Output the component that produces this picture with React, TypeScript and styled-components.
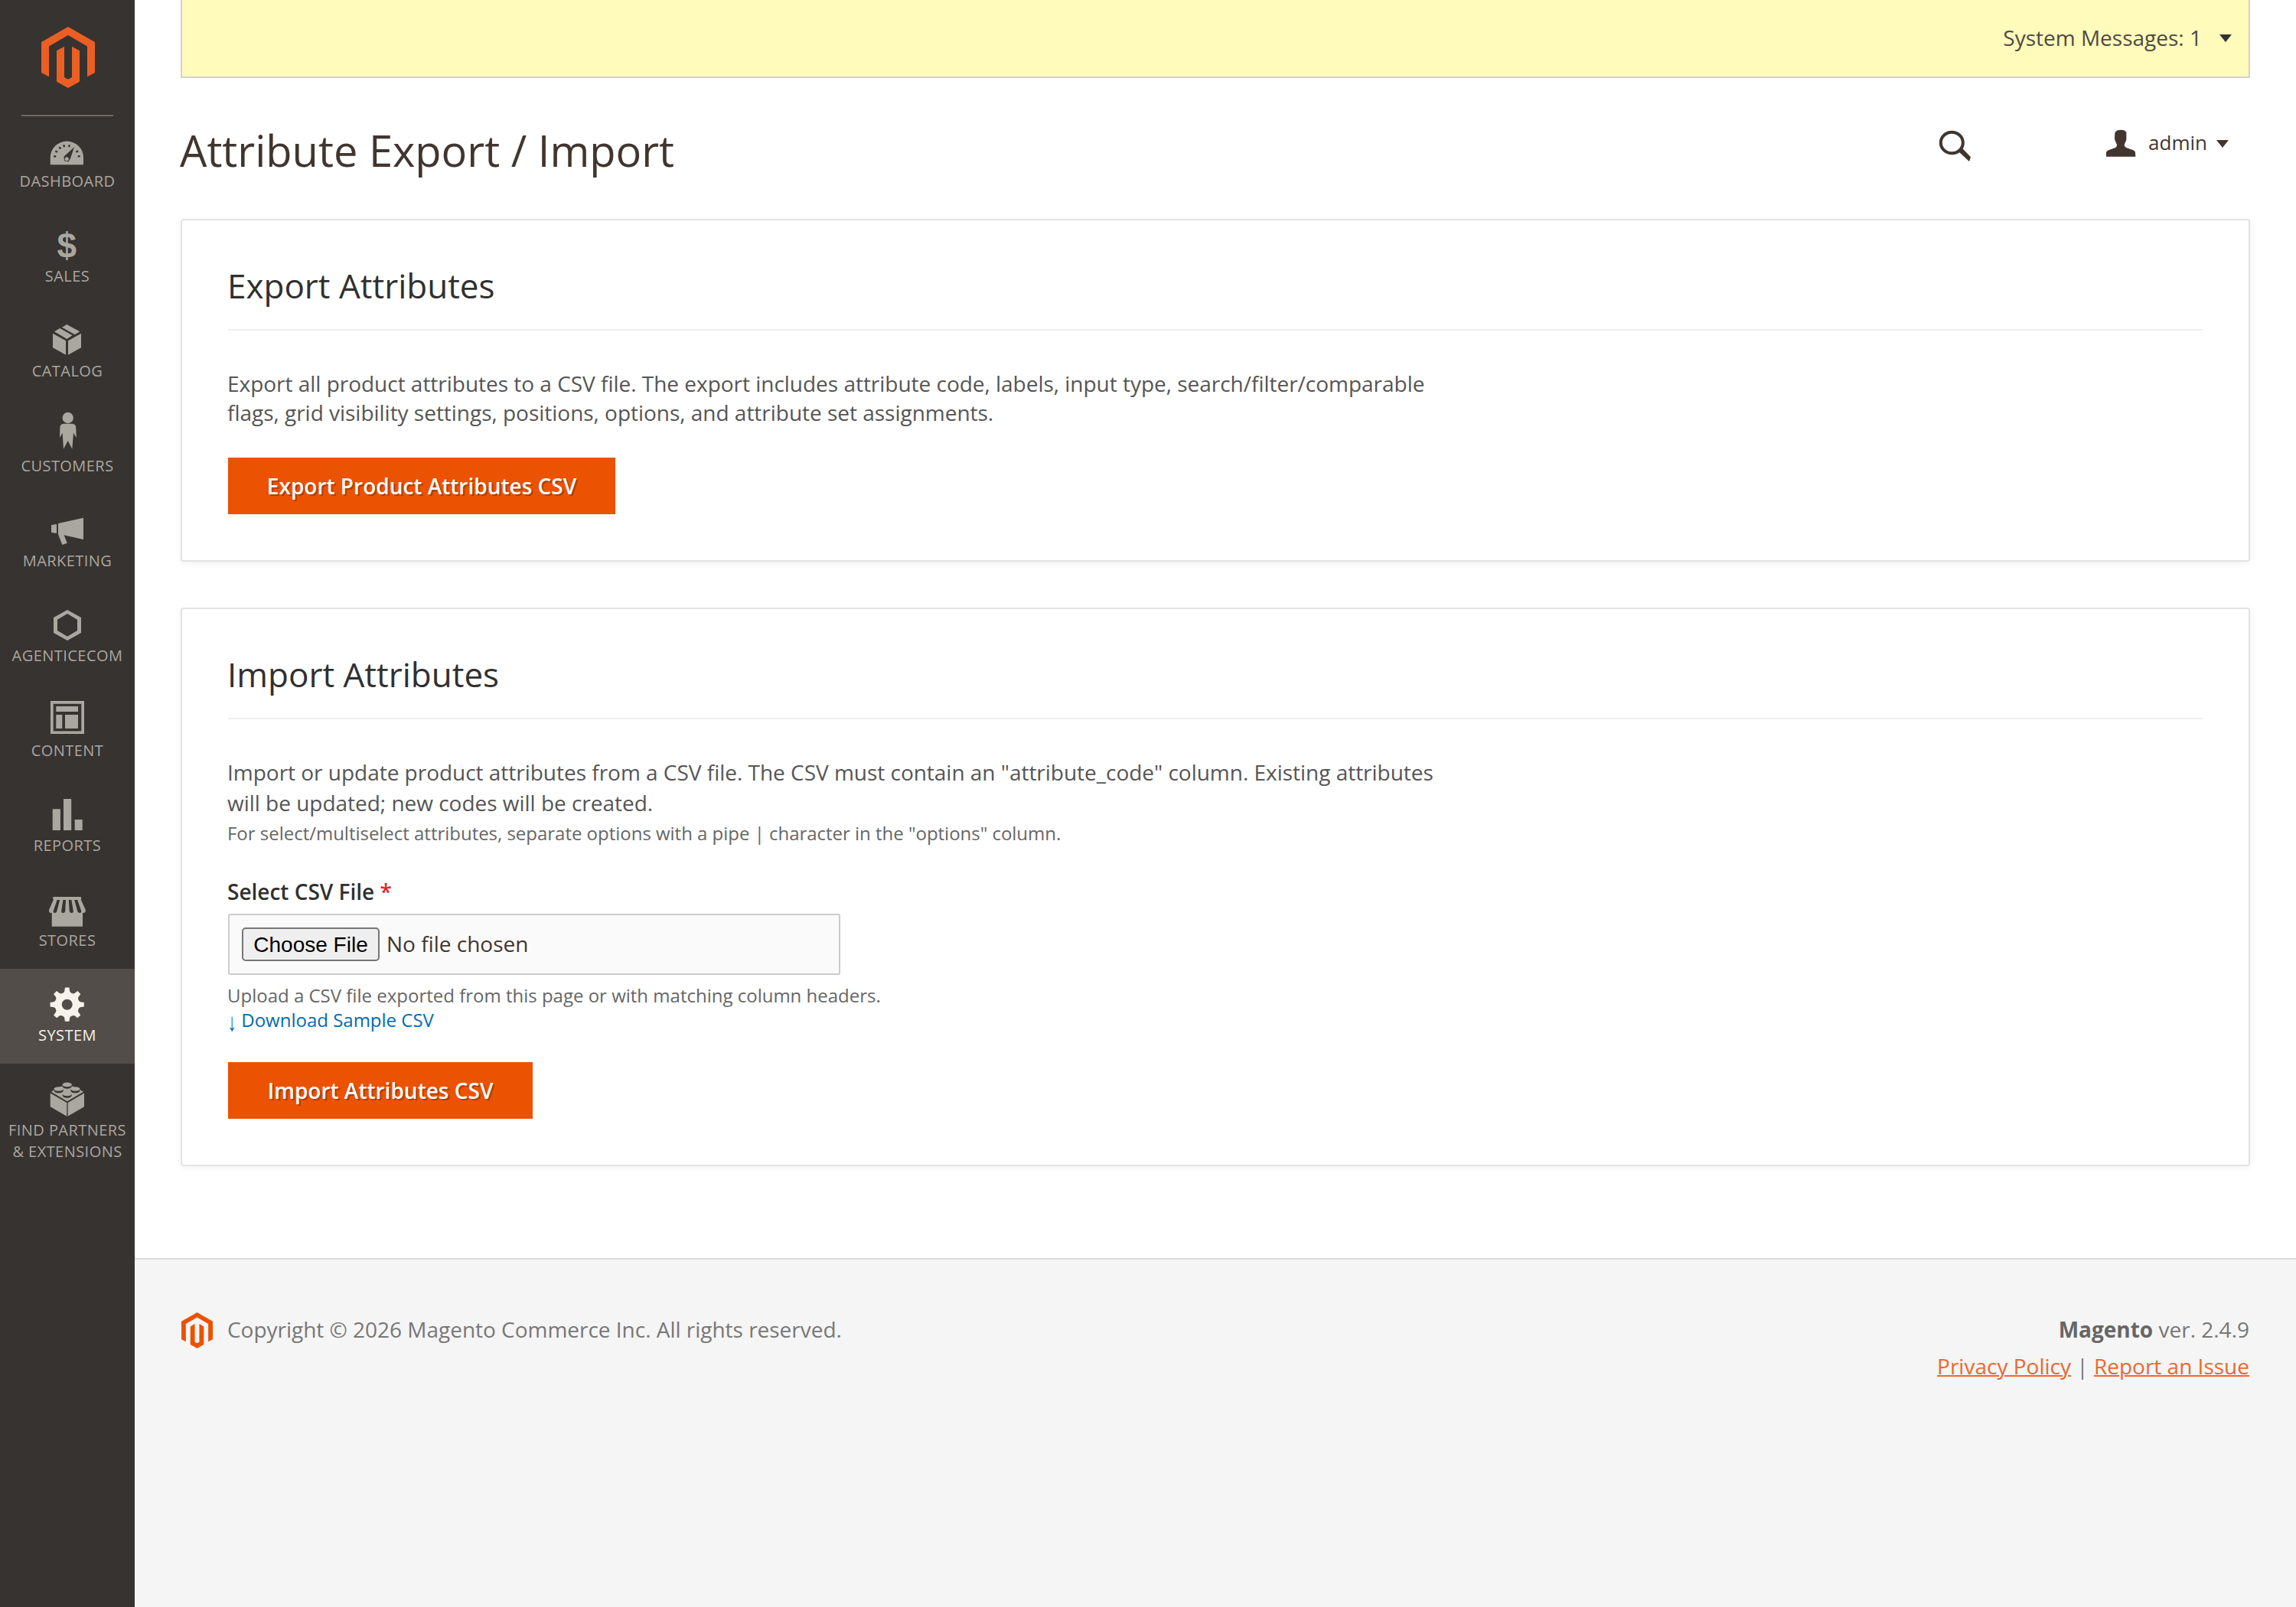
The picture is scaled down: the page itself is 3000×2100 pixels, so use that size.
import React from "react";
import styled, { createGlobalStyle } from "styled-components";

const FONT = '"Open Sans", "Noto Sans", sans-serif';

const GlobalStyle = createGlobalStyle`
  * { box-sizing: border-box; }
  body { margin: 0; background: #fff; font-family: ${FONT}; font-size: 28px; color: #41362f; }
  h1, h2, p { margin: 0; font-weight: 400; }
`;

const Page = styled.div`
  display: flex;
  width: 3000px;
  height: 2100px;
  overflow: hidden;
`;

const Sidebar = styled.nav`
  flex: none;
  width: 176px;
  background: #373330;
`;

const LogoArea = styled.a`
  display: flex;
  justify-content: center;
  height: 150px;
  padding: 35px 0 0 2px;
`;

const Divider = styled.div`
  height: 2px;
  margin: 0 28px -2px;
  background: #736963;
`;

const MenuItem = styled.a<{ $active?: boolean; $tall?: boolean }>`
  display: flex;
  flex-direction: column;
  align-items: center;
  height: ${(p) => (p.$tall ? 152 : 124)}px;
  padding-top: 16px;
  background: ${(p) => (p.$active ? "#524d49" : "transparent")};
  color: ${(p) => (p.$active ? "#f7f3eb" : "#aaa6a0")};
  fill: currentColor;
`;

const MenuIcon = styled.svg`
  display: block;
  width: 64px;
  height: 56px;
  --cut: #373330;
`;

const MenuLabel = styled.span`
  margin-top: 1px;
  font-size: 20px;
  letter-spacing: 0.45px;
  line-height: 28px;
  text-align: center;
  text-transform: uppercase;
  white-space: pre-line;
`;

const Main = styled.div`
  flex: 1;
  display: flex;
  flex-direction: column;
  min-width: 0;
`;

const Content = styled.div`
  flex: none;
  height: 1644px;
  padding: 0 60px;
`;

const MessageBar = styled.div`
  display: flex;
  align-items: center;
  justify-content: flex-end;
  gap: 23px;
  height: 102px;
  padding-right: 22px;
  border: 2px solid #d1d1d1;
  border-top: 0;
  background: #fffbbb;
  color: #514943;
`;

const MessageCount = styled.span`
  padding-bottom: 2px;
`;

const Caret = styled.span<{ $color: string }>`
  width: 0;
  height: 0;
  border: 8px solid transparent;
  border-top: 10px solid ${(p) => p.$color};
  border-bottom: 0;
`;

const PageHeader = styled.header`
  display: flex;
  justify-content: space-between;
  height: 184px;
`;

const PageTitle = styled.h1`
  padding-top: 56px;
  font-size: 56px;
  line-height: 76px;
  text-indent: -1px;
`;

const HeaderTools = styled.div`
  display: flex;
  align-items: flex-start;
  padding: 65px 28px 0 0;
`;

const SearchIcon = styled.svg`
  width: 50px;
  height: 50px;
  margin-right: 171px;
`;

const UserMenu = styled.div`
  display: flex;
  align-items: center;
  height: 40px;
  padding-top: 2px;
  font-size: 26px;
`;

const UserIcon = styled.svg`
  width: 40px;
  height: 36px;
  margin: -2px 16px 0 0;
`;

const UserName = styled.span`
  margin-right: 12px;
  padding-bottom: 4px;
`;

const Card = styled.section<{ $height: number }>`
  height: ${(p) => p.$height}px;
  margin-bottom: 60px;
  padding: 52px 60px 0;
  border: 2px solid #e3e3e3;
  border-radius: 4px;
  box-shadow: 0 2px 8px rgba(0, 0, 0, 0.06);
`;

const CardTitle = styled.h2`
  height: 92px;
  padding-top: 1px;
  border-bottom: 2px solid #f0f0f0;
  font-size: 44px;
  line-height: 64px;
  text-indent: -1px;
  color: #303030;
`;

const Intro = styled.p<{ $line: number; $top: number }>`
  width: 1600px;
  margin-left: -1px;
  padding-top: ${(p) => p.$top}px;
  letter-spacing: -0.02px;
  line-height: ${(p) => p.$line}px;
  color: #555;
`;

const Note = styled.p`
  margin: 1px 0 0 -1px;
  font-size: 24px;
  letter-spacing: -0.02px;
  line-height: 38px;
  color: #666;
`;

const PrimaryButton = styled.button<{ $width: number; $top: number }>`
  display: flex;
  align-items: center;
  justify-content: center;
  width: ${(p) => p.$width}px;
  height: 74px;
  margin-top: ${(p) => p.$top}px;
  padding: 0 0 1px;
  border: 0;
  background: #eb5202;
  color: #fff;
  font: 600 28px ${FONT};
  text-shadow: 2px 2px 0 rgba(0, 0, 0, 0.25);
`;

const FieldLabel = styled.label`
  display: block;
  margin: 38px 0 0 -1px;
  font-weight: 600;
  line-height: 38px;
  color: #303030;
`;

const Required = styled.span`
  color: #e22626;
`;

const FileField = styled.div`
  display: flex;
  align-items: center;
  gap: 9px;
  width: 800px;
  height: 80px;
  margin-top: 10px;
  padding-left: 16px;
  border: 2px solid #ccc;
  border-radius: 2px;
  background: #fafafa;
`;

const ChooseButton = styled.button`
  width: 180px;
  height: 44px;
  padding: 1px 0 0;
  border: 2px solid #767676;
  border-radius: 5px;
  background: #efefef;
  color: #000;
  font: 28px "Liberation Sans", Arial, sans-serif;
`;

const FileName = styled.span`
  padding-bottom: 2px;
`;

const Help = styled.p`
  margin: 11px 0 0 -1px;
  font-size: 24px;
  line-height: 32px;
  color: #666;
`;

const SampleLink = styled.a`
  display: block;
  height: 32px;
  color: #006bb4;
`;

const DownArrow = styled.span`
  display: inline-block;
  font-family: "Liberation Serif", "Times New Roman", serif;
  line-height: 1;
  transform: translateY(2px) scaleY(1.35);
`;

const Footer = styled.footer`
  flex: 1;
  display: flex;
  justify-content: space-between;
  padding: 67px 60px 0;
  border-top: 2px solid #ddd;
  background: #f5f5f5;
  color: #777;
`;

const Copyright = styled.div`
  display: flex;
  align-items: flex-start;
  gap: 19px;
  line-height: 48px;
  padding-left: 1px;
  letter-spacing: -0.02px;
`;

const FooterLogo = styled.svg`
  width: 41px;
  height: 47px;
  margin-top: 2px;
`;

const Legal = styled.div`
  margin-right: 1px;
  line-height: 48px;
  text-align: right;

  strong { color: #666; font-weight: 700; }
`;

const FooterLink = styled.a`
  color: #ef672f;
  text-decoration: underline;
  text-decoration-thickness: 2px;
`;

const LogoShape = () => (
  <path d="M35 0 70 20V60L60 65.3V25.5L35 11 10 25.5V65.3L0 60V20ZM30 25.7V66L35 68.7 40 66V25.7L50 31.3V71.7L35 80 20 71.7V31.3Z" />
);

const gearPath = () => {
  const points: string[] = [];
  for (let tooth = 0; tooth < 8; tooth++) {
    const base = (tooth * Math.PI) / 4 - Math.PI / 2;
    [
      [-0.29, 16.2],
      [-0.2, 17.6],
      [-0.125, 22.3],
      [0.125, 22.3],
      [0.2, 17.6],
      [0.29, 16.2],
    ].forEach(([offset, radius]) => {
      const x = 87.7 + radius * Math.cos(base + offset);
      const y = 46.7 + radius * Math.sin(base + offset);
      points.push(`${x.toFixed(2)} ${y.toFixed(2)}`);
    });
  }
  return `M${points.join("L")}Z M94.7 46.7a7 7 0 1 0-14 0a7 7 0 1 0 14 0Z`;
};

const ticks = [
  [71.7, 54.3, 5],
  [73.7, 48, 25],
  [78.3, 43.3, 45],
  [83.7, 40.7, 75],
  [90.5, 40.7, 105],
  [100.7, 48, 155],
  [103.2, 54.3, 175],
];

const icons: Record<string, React.ReactNode> = {
  dashboard: (
    <>
      <path d="M65.7 65.3V56a21.65 21.4 0 0 1 43.3 0v9.3Z" />
      <g fill="var(--cut)">
        {ticks.map(([x, y, turn]) => (
          <rect key={x} x={x - 1.5} y={y - 1.1} width="3" height="2.3" transform={`rotate(${turn} ${x} ${y})`} />
        ))}
        <path d="M97 42.3 92 57 89.6 61.2 84.4 60.6 83.3 54.8Z" />
      </g>
      <circle cx="87.3" cy="57.7" r="2.5" />
    </>
  ),
  sales: (
    <text x="87.4" y="62.8" textAnchor="middle" fontFamily="Liberation Sans, Arial, sans-serif" fontWeight="700" fontSize="46">
      $
    </text>
  ),
  catalog: (
    <path d="M69 37.7 86 47.3V65.7L69 56.3ZM89 47.3 106 37.7V56.3L89 65.7ZM71 35.3 78.3 31 94.7 40.3 87.3 45ZM81 29.7 87.3 26 104.3 35.3 97.7 39.3Z" />
  ),
  customers: (
    <>
      <circle cx="88.7" cy="24" r="7.2" />
      <path d="M83 31.7H94.5Q98.7 32 99.2 36L99.8 50 96 43.7 94.3 64.7 88.7 54 83 64.7 81.6 43.7 78 50 78.4 36Q79 32 83 31.7Z" />
    </>
  ),
  marketing: (
    <path d="M67 40 74 39V51L67 49.7ZM76 38 109 30.7V59L83.7 53.3 87.7 63.7 81.3 66 76 52Z" />
  ),
  agenticecom: (
    <path fillRule="evenodd" d="M88 27 106 37V57L88 67 70 57V37ZM88 32 75 39.7V54L88 61.7 101 54V39.7Z" />
  ),
  content: (
    <path fillRule="evenodd" d="M66 22H110V65H66ZM69.7 25.7V61.4H106.3V25.7ZM73.3 29H102V36H73.3ZM73.3 40H81.3V58H73.3ZM85 40H102V58H85Z" />
  ),
  reports: <path d="M68.7 39.2H78.9V67H68.7ZM83 26H93.2V67H83ZM97.7 53H107.7V67H97.7Z" />,
  stores: (
    <>
      <path d="M70 30H105Q106.4 30 106.4 32L105.7 33.5 111.8 47Q112 51 109 51H108V68.8H67.7V51H66.5Q63.5 51 64 47L70 33.5 69 32Q69 30 70 30Z" />
      <path
        fill="var(--cut)"
        d="M74.6 34H78.2L74.4 48.5Q73.8 51 71.6 51Q69.3 51 69.7 48.5ZM82.4 34H86L85.2 48.5Q84.8 51 82.6 51Q80 51 80.2 48.5ZM89.8 34H93.4L95.8 48.5Q96 51 93.6 51Q91 51 90.7 48.5ZM97.2 34H101.2L106.2 48.5Q106.4 51 104 51Q101.8 51 101.2 48.5Z"
      />
    </>
  ),
  system: <path fillRule="evenodd" d={gearPath()} />,
  partners: (
    <>
      <path d="M65.7 38.6 87.3 51V68.7L65.7 56.3ZM88.6 51 110 38.6V56.3L88.6 68.7ZM67 36.8 74 32 87.7 27 101 32 109 36.8 87.9 49.2Z" />
      {[
        [87.7, 27.4],
        [76.7, 33],
        [98.3, 33],
        [87.7, 39.4],
      ].map(([x, y]) => (
        <g key={`${x}-${y}`}>
          <path fill="var(--cut)" d={`M${x - 6} ${y}V${y + 2.4}A6 2.9 0 0 0 ${x + 6} ${y + 2.4}V${y}Z`} />
          <ellipse cx={x} cy={y} rx="6.2" ry="2.8" />
        </g>
      ))}
    </>
  ),
};

const menu = [
  { icon: "dashboard", label: "Dashboard" },
  { icon: "sales", label: "Sales" },
  { icon: "catalog", label: "Catalog" },
  { icon: "customers", label: "Customers" },
  { icon: "marketing", label: "Marketing" },
  { icon: "agenticecom", label: "Agenticecom" },
  { icon: "content", label: "Content" },
  { icon: "reports", label: "Reports" },
  { icon: "stores", label: "Stores" },
  { icon: "system", label: "System", active: true },
  { icon: "partners", label: "Find Partners\n& Extensions", tall: true },
];

export default function App() {
  return (
    <>
      <GlobalStyle />
      <Page>
        <Sidebar>
          <LogoArea>
            <svg width="70" height="80" viewBox="0 0 70 80" fill="#eb5f24">
              <LogoShape />
            </svg>
          </LogoArea>
          <Divider />
          {menu.map((item) => (
            <MenuItem key={item.icon} $active={item.active} $tall={item.tall}>
              <MenuIcon viewBox="56 16 64 56">{icons[item.icon]}</MenuIcon>
              <MenuLabel>{item.label}</MenuLabel>
            </MenuItem>
          ))}
        </Sidebar>

        <Main>
          <Content>
            <MessageBar>
              <MessageCount>System Messages: 1</MessageCount>
              <Caret $color="#333" />
            </MessageBar>

            <PageHeader>
              <PageTitle>Attribute Export / Import</PageTitle>
              <HeaderTools>
                <SearchIcon viewBox="150 500 150 150">
                  <ellipse cx="211" cy="558.5" rx="43.5" ry="41.5" fill="none" stroke="#41362f" strokeWidth="12" />
                  <path d="M237 593 252 580 285 615 279 632Z" fill="#41362f" />
                </SearchIcon>
                <UserMenu>
                  <UserIcon viewBox="812 505 120 108" fill="#41362f">
                    <path d="M815 612V596Q816 590 824 587L849 578Q858 574 857 565L852 554Q848 549 848 541L849 519Q853 507 872 507Q890 507 894 517V541Q895 549 891 554L886 565Q886 574 896 578L921 587Q929 590 929 596L930 612Z" />
                  </UserIcon>
                  <UserName>admin</UserName>
                  <Caret $color="#41362f" />
                </UserMenu>
              </HeaderTools>
            </PageHeader>

            <Card $height={448}>
              <CardTitle>Export Attributes</CardTitle>
              <Intro $line={38} $top={50}>
                Export all product attributes to a CSV file. The export includes attribute code, labels, input type, search/filter/comparable flags, grid visibility settings, positions, options, and attribute set assignments.
              </Intro>
              <PrimaryButton $width={506} $top={40}>Export Product Attributes CSV</PrimaryButton>
            </Card>

            <Card $height={730}>
              <CardTitle>Import Attributes</CardTitle>
              <Intro $line={40} $top={49}>
                Import or update product attributes from a CSV file. The CSV must contain an "attribute_code" column. Existing attributes will be updated; new codes will be created.
              </Intro>
              <Note>For select/multiselect attributes, separate options with a pipe | character in the "options" column.</Note>
              <FieldLabel>
                Select CSV File <Required>*</Required>
              </FieldLabel>
              <FileField>
                <ChooseButton>Choose File</ChooseButton>
                <FileName>No file chosen</FileName>
              </FileField>
              <Help>
                Upload a CSV file exported from this page or with matching column headers.
                <SampleLink>
                  <DownArrow>↓</DownArrow> Download Sample CSV
                </SampleLink>
              </Help>
              <PrimaryButton $width={398} $top={39}>Import Attributes CSV</PrimaryButton>
            </Card>
          </Content>

          <Footer>
            <Copyright>
              <FooterLogo viewBox="0 0 70 80" fill="#eb5202">
                <LogoShape />
              </FooterLogo>
              <span>Copyright © 2026 Magento Commerce Inc. All rights reserved.</span>
            </Copyright>
            <Legal>
              <div>
                <strong>Magento</strong> ver. 2.4.9
              </div>
              <div>
                <FooterLink>Privacy Policy</FooterLink> | <FooterLink>Report an Issue</FooterLink>
              </div>
            </Legal>
          </Footer>
        </Main>
      </Page>
    </>
  );
}
